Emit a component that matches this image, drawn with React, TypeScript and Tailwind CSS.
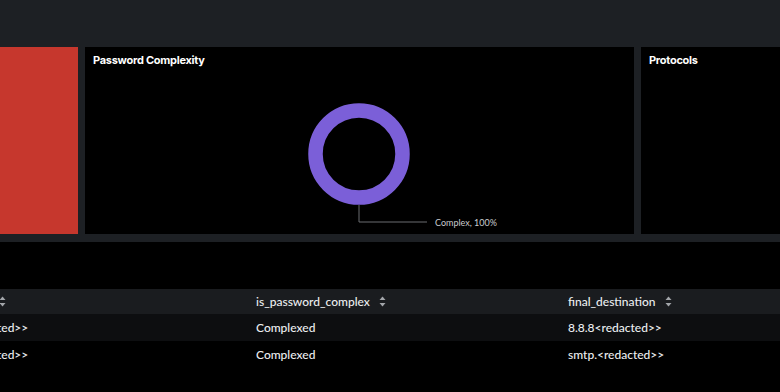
import React from 'react';

function SortIcon() {
  return (
    <svg width="7" height="11" viewBox="0 0 7 11" className="shrink-0">
      <path d="M3.5 0.5 L6.5 4 L0.5 4 Z" fill="#a3a6aa" />
      <path d="M3.5 10.5 L6.5 7 L0.5 7 Z" fill="#a3a6aa" />
    </svg>
  );
}

const rows = [
  { src: '<redacted>>', complex: 'Complexed', dest: '8.8.8<redacted>>' },
  { src: '<redacted>>', complex: 'Complexed', dest: 'smtp.<redacted>>' },
];

export default function App() {
  return (
    <div className="w-[780px] h-[392px] overflow-hidden bg-black font-['Inter',sans-serif] text-white">
      {/* top bar */}
      <div className="h-[47px] bg-[#1d2024]" />

      {/* panel row */}
      <div className="flex gap-[7px] bg-[#1d2024] pb-[8px]">
        <div className="w-[78px] h-[187px] bg-[#c6372d]" />

        <div className="w-[549px] h-[187px] bg-black flex flex-col">
          <h3 className="px-2 pt-[5px] h-[27px] text-[11px] font-bold tracking-tight">Password Complexity</h3>
          <svg width="549" height="160" viewBox="0 0 549 160">
            <circle cx="274" cy="80" r="43.5" fill="none" stroke="#7b5fd8" strokeWidth="14.5" />
            <polyline points="274,131 274,148 342,148" fill="none" stroke="#6a6d71" strokeWidth="1" />
            <text x="350" y="151.5" fill="#c9cbce" fontSize="9" fontFamily="Lato, sans-serif">Complex, 100%</text>
          </svg>
        </div>

        <div className="flex-1 h-[187px] bg-black">
          <h3 className="px-2 pt-[5px] text-[11px] font-bold tracking-tight">Protocols</h3>
        </div>
      </div>

      <div className="h-[47px]" />

      {/* table */}
      <div className="-ml-[39px] font-['Lato',sans-serif] text-[12px] font-medium text-[#eceef0]">
        <div className="flex h-[25px] items-center bg-[#1a1c1f]">
          <div className="w-[295px] flex items-center gap-[8px]">
            <span className="w-[30px] overflow-hidden whitespace-nowrap">sender</span>
            <SortIcon />
          </div>
          <div className="w-[312px] flex items-center gap-[9px]">
            <span>is_password_complex</span>
            <SortIcon />
          </div>
          <div className="flex-1 flex items-center gap-[9px]">
            <span>final_destination</span>
            <SortIcon />
          </div>
        </div>
        {rows.map((r, i) => (
          <div key={i} className={`flex h-[27px] items-center ${i === 0 ? 'bg-[#0d0e10]' : 'bg-black'}`}>
            <div className="w-[295px]">{r.src}</div>
            <div className="w-[312px]">{r.complex}</div>
            <div className="flex-1">{r.dest}</div>
          </div>
        ))}
      </div>
    </div>
  );
}
